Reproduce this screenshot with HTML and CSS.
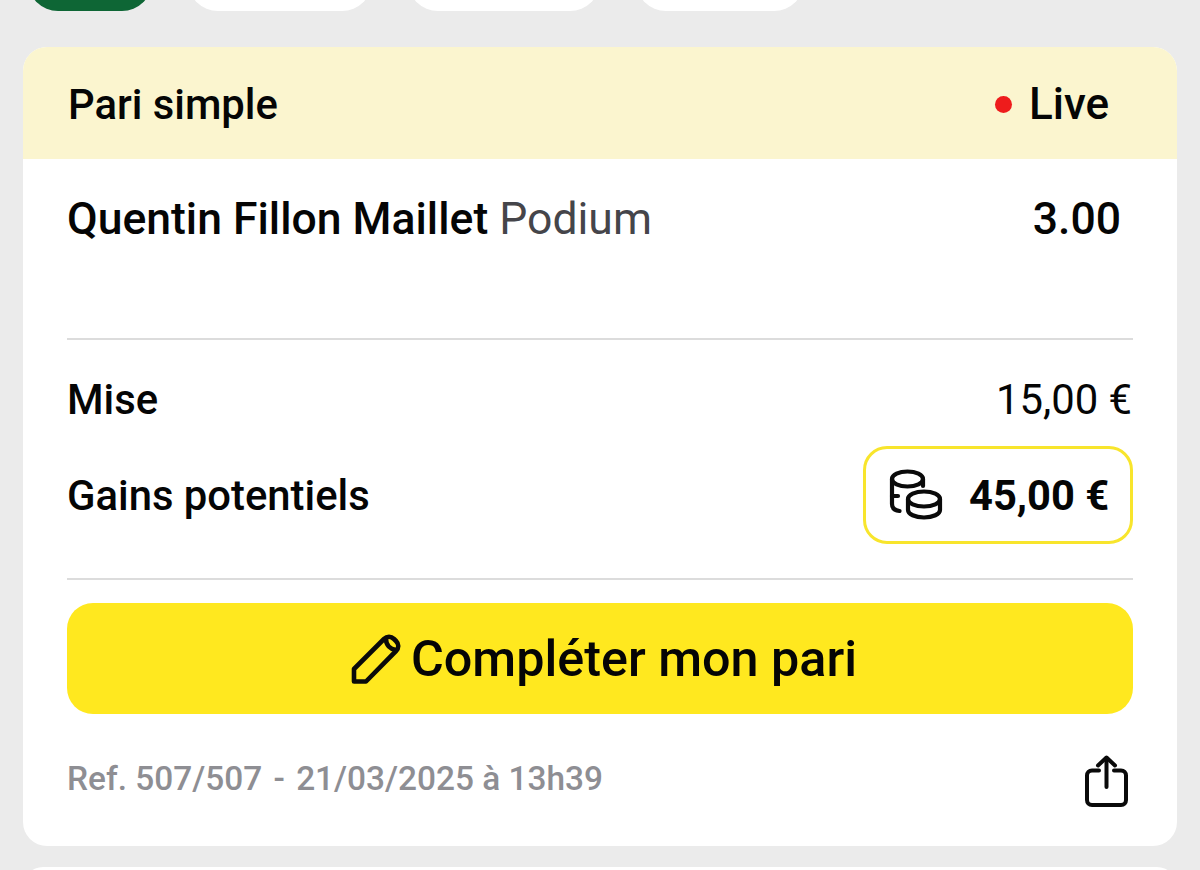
FILE: index.html
```html
<!DOCTYPE html>
<html lang="fr">
<head>
    <meta charset="UTF-8">
    <title>Pari simple</title>
    <link rel="stylesheet" href="styles.css">
</head>
<body>
    <div class="tabs">
        <div class="tab tab-active tab-1"></div>
        <div class="tab tab-2"></div>
        <div class="tab tab-3"></div>
        <div class="tab tab-4"></div>
    </div>
    <div class="card">
        <div class="card-header">
            <span>Pari simple</span>
            <span class="live"><span class="live-dot"></span>Live</span>
        </div>
        <div class="card-body">
            <div class="selection">
                <div><span class="player">Quentin Fillon Maillet</span> <span class="market">Podium</span></div>
                <div class="odds">3.00</div>
            </div>
            <div class="stake-block">
                <div class="row row-stake">
                    <span class="row-label">Mise</span>
                    <span class="stake">15,00 €</span>
                </div>
                <div class="row row-gains">
                    <span class="row-label">Gains potentiels</span>
                    <div class="gains-box">
                        <svg class="coins" width="54" height="52" viewBox="0 0 54 52" fill="none" stroke="#0a0a0a" stroke-width="4.2" stroke-linecap="round" stroke-linejoin="round">
                            <ellipse cx="18.500" cy="10" rx="15.500" ry="7.500"/>
                            <path d="M3 10v25c0 4 3 6.500 7.500 7"/>
                            <path d="M34 10v7"/>
                            <path d="M3 27h6"/>
                            <ellipse cx="35" cy="30" rx="16" ry="7.500"/>
                            <path d="M19 30v11c0 4 7 7.500 16 7.500s16-3.500 16-7.500V30"/>
                        </svg>
                        <span class="gains">45,00 €</span>
                    </div>
                </div>
            </div>
            <button class="complete-btn">
                <svg width="50" height="50" viewBox="0 0 50 50" fill="none" stroke="#0a0a0a" stroke-width="4.600" stroke-linejoin="round" stroke-linecap="round">
                    <path d="M3 47.500V35L33 5c3-3 7-3 10 0l2 2c3 3 3 7 0 10L15 47.500z"/>
                    <path d="M35 5c0 6 4 10 10 11"/>
                </svg>
                Compléter mon pari
            </button>
            <div class="card-footer">
                <span class="ref">Ref. 507/507 <span class="ref-sep">-</span> 21/03/2025 à 13h39</span>
                <svg class="share" width="44" height="52" viewBox="0 0 44 52" fill="none" stroke="#0a0a0a" stroke-width="4" stroke-linecap="round" stroke-linejoin="round">
                    <path d="M14 15.500H7c-3 0-5 2-5 5V45c0 3 2 5 5 5h29c3 0 5-2 5-5V20.500c0-3-2-5-5-5h-7"/>
                    <path d="M21.500 32V3"/>
                    <path d="M13 10.500L21.500 2.500l8.500 8"/>
                </svg>
            </div>
        </div>
    </div>
    <div class="next-card"></div>
</body>
</html>
```
FILE: styles.css
```css
html, body {
    height: 870px;
    overflow: hidden;
}
body {
    margin: 0;
    background-color: #ebebeb;
    font-family: Roboto, sans-serif;
    color: #050505;
}
.tabs {
    display: flex;
    align-items: flex-end;
    height: 11px;
    padding-left: 28px;
    overflow: hidden;
}
.tab {
    flex-shrink: 0;
    height: 60px;
    background: #fff;
    border-radius: 0 0 30px 30px;
}
.tab-active { background: #0e6635; }
.tab-1 { width: 124px; }
.tab-2 { width: 184px; margin-left: 36px; }
.tab-3 { width: 192px; margin-left: 36px; }
.tab-4 { width: 168px; margin-left: 36px; }
.card {
    margin: 36px 23px 0;
    height: 799px;
    background: #fff;
    border-radius: 24px;
    overflow: hidden;
}
.card-header {
    display: flex;
    justify-content: space-between;
    align-items: center;
    box-sizing: border-box;
    height: 112px;
    padding: 2px 68px 0 45px;
    background: #fbf5cf;
    font-size: 41.800px;
    font-weight: 500;
}
.live {
    display: flex;
    align-items: center;
    font-size: 44px;
}
.live-dot {
    width: 17px;
    height: 17px;
    margin-right: 17px;
    border-radius: 50%;
    background: #ee1c1c;
}
.card-body {
    padding: 0 44px;
}
.selection {
    display: flex;
    justify-content: space-between;
    align-items: center;
    box-sizing: border-box;
    height: 119px;
    padding: 1px 12px 0 0;
    font-size: 44.500px;
}
.player, .odds {
    font-weight: 500;
}
.market {
    color: #45454a;
}
.stake-block {
    box-sizing: border-box;
    height: 242px;
    margin-top: 60px;
    border-top: 2px solid #dcdcdc;
    border-bottom: 2px solid #dcdcdc;
}
.row {
    display: flex;
    justify-content: space-between;
    align-items: center;
}
.row-stake {
    box-sizing: border-box;
    height: 106px;
    padding: 13px 1px 0 0;
}
.row-label {
    font-size: 41.800px;
    font-weight: 500;
}
.stake {
    font-size: 41.800px;
}
.gains-box {
    display: flex;
    align-items: center;
    box-sizing: border-box;
    width: 270px;
    height: 98px;
    padding-left: 23px;
    border: 3px solid #f8e52c;
    border-radius: 24px;
}
.gains {
    margin-left: 26px;
    font-size: 41.700px;
    font-weight: 700;
}
.complete-btn {
    display: flex;
    justify-content: center;
    align-items: center;
    gap: 10px;
    width: 100%;
    height: 111px;
    margin-top: 23px;
    padding: 0 0 0 8px;
    border: none;
    border-radius: 26px;
    background: #ffe81f;
    color: #050505;
    font-family: Roboto, sans-serif;
    font-size: 50.300px;
    font-weight: 500;
}
.card-footer {
    display: flex;
    justify-content: space-between;
    align-items: center;
    margin-top: 36px;
    padding: 0 4px 0 0;
}
.ref {
    color: #8e8e93;
    font-size: 33.400px;
    font-weight: 500;
}
.ref-sep {
    margin: 0 3px;
}
.share {
    margin-top: 5px;
}
.next-card {
    height: 20px;
    margin: 21px 23px 0;
    background: #fff;
    border-radius: 24px 24px 0 0;
}
```
